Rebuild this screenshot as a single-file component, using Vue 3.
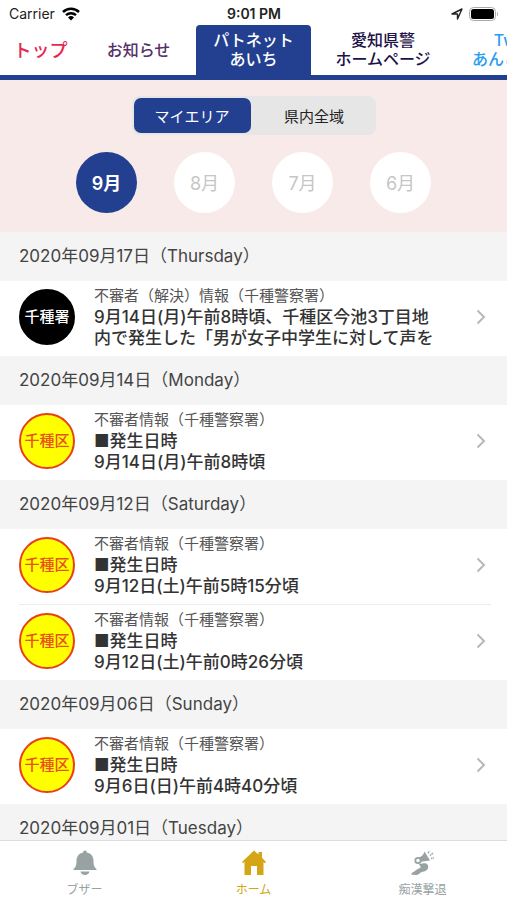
<script setup>
import { ref } from "vue";

const tabs = [
  { name: "top", lines: ["トップ"] },
  { name: "news", lines: ["お知らせ"] },
  { name: "patnet", lines: ["パトネット", "あいち"] },
  { name: "police", lines: ["愛知県警", "ホームページ"] },
  { name: "twitter", lines: ["Twitter", "あんころりん"] },
];
const activeTab = ref("patnet");

const areas = ["マイエリア", "県内全域"];
const area = ref(areas[0]);

const months = ["9月", "8月", "7月", "6月"];
const month = ref(months[0]);

const days = [
  {
    date: "2020年09月17日（Thursday）",
    items: [
      {
        id: 1,
        badge: "千種署",
        solved: true,
        title: "不審者（解決）情報（千種警察署）",
        body: ["9月14日(月)午前8時頃、千種区今池3丁目地", "内で発生した「男が女子中学生に対して声を"],
      },
    ],
  },
  {
    date: "2020年09月14日（Monday）",
    items: [
      { id: 2, badge: "千種区", title: "不審者情報（千種警察署）", body: ["■発生日時", "9月14日(月)午前8時頃"] },
    ],
  },
  {
    date: "2020年09月12日（Saturday）",
    items: [
      { id: 3, badge: "千種区", title: "不審者情報（千種警察署）", body: ["■発生日時", "9月12日(土)午前5時15分頃"] },
      { id: 4, badge: "千種区", title: "不審者情報（千種警察署）", body: ["■発生日時", "9月12日(土)午前0時26分頃"] },
    ],
  },
  {
    date: "2020年09月06日（Sunday）",
    items: [
      { id: 5, badge: "千種区", title: "不審者情報（千種警察署）", body: ["■発生日時", "9月6日(日)午前4時40分頃"] },
    ],
  },
  { date: "2020年09月01日（Tuesday）", items: [] },
];

const page = ref("home");
</script>

<template>
  <div class="app">
    <div class="status">
      <div class="status-left">
        <span>Carrier</span>
        <svg width="20" height="15" viewBox="0 0 20 15">
          <path d="M2 6a11.500 11.500 0 0 1 16 0M5 9.200a7.300 7.300 0 0 1 10 0" fill="none" stroke="#000" stroke-width="2.500" />
          <path d="M10 14.500l-3-3a4.300 4.300 0 0 1 6 0z" />
        </svg>
      </div>
      <strong class="clock">9:01 PM</strong>
      <div class="status-right">
        <svg width="12" height="12" viewBox="0 0 12 12">
          <path d="M1 6L11 1L6.500 11V6z" fill="none" stroke="#222" stroke-width="1.400" stroke-linejoin="round" />
        </svg>
        <svg width="30" height="14" viewBox="0 0 30 14">
          <rect x="0.500" y="0.500" width="26" height="13" rx="4" fill="#fff" stroke="#aaa" />
          <rect x="2" y="2" width="23" height="10" rx="2.500" />
          <path d="M28 4.500q2 2.500 0 5z" fill="#aaa" />
        </svg>
      </div>
    </div>

    <nav class="tabs">
      <button v-for="t in tabs" :key="t.name" class="tab" :class="[t.name, { active: activeTab === t.name }]"
        @click="activeTab = t.name">
        <span v-for="line in t.lines" :key="line">{{ line }}</span>
      </button>
    </nav>

    <section class="filter">
      <div class="segment">
        <button v-for="a in areas" :key="a" :class="{ on: area === a }" @click="area = a">{{ a }}</button>
      </div>
      <div class="months">
        <button v-for="m in months" :key="m" :class="{ on: month === m }" @click="month = m">{{ m }}</button>
      </div>
    </section>

    <main class="list">
      <section v-for="day in days" :key="day.date">
        <h2 class="date">{{ day.date }}</h2>
        <ul class="items">
          <li v-for="item in day.items" :key="item.id">
            <a href="#" class="row" @click.prevent>
              <span class="badge" :class="{ solved: item.solved }">{{ item.badge }}</span>
              <span class="text">
                <span class="title">{{ item.title }}</span>
                <span v-for="line in item.body" :key="line" class="line">{{ line }}</span>
              </span>
              <svg class="arrow" width="10" height="16" viewBox="0 0 10 16">
                <path d="M1.500 1.500L8 8L1.500 14.500" fill="none" stroke="#b8b8b8" stroke-width="2" />
              </svg>
            </a>
          </li>
        </ul>
      </section>
    </main>

    <nav class="bottom">
      <button :class="{ current: page === 'buzzer' }" @click="page = 'buzzer'">
        <svg width="26" height="26" viewBox="0 0 26 26" fill="currentColor">
          <path d="M13 0.500c1.200 0 1.800.9 1.800 1.900C19 3.300 21.500 6.300 21.500 10.500c0 4.500.5 6.500 3 8.500v1h-23v-1c2.500-2 3-4 3-8.500 0-4.200 2.500-7.200 6.700-8.100 0-1 .6-1.900 1.800-1.900z" />
          <path d="M8.500 21.500h9c-.5 2.200-2.200 3.500-4.500 3.500s-4-1.300-4.500-3.500z" />
        </svg>
        <span>ブザー</span>
      </button>
      <button :class="{ current: page === 'home' }" @click="page = 'home'">
        <svg width="26" height="26" viewBox="0 0 26 26" fill="currentColor">
          <path d="M13 0.500l4.500 4V2H21v5.800L25 12l-1.200 1.200L22.500 12V25H16v-9h-6v9H3.500V12l-1.300 1.200L1 12z" />
        </svg>
        <span>ホーム</span>
      </button>
      <button :class="{ current: page === 'repel' }" @click="page = 'repel'">
        <svg width="26" height="26" viewBox="0 0 26 26" fill="currentColor">
          <path d="M14.500 1.500l5.500 9-9 1.200-2.500-4.200c3-.8 5-2.800 6-6z" />
          <circle cx="8" cy="10.500" r="2.700" fill="none" stroke="currentColor" stroke-width="1.800" />
          <path d="M8.500 13.500c2.500 1 4-.5 6.500-.3 2.500.3 3.800 2.500 3 5-.7 2.200-3.300 3.300-5.500 3.600-2.500.4-3.500 3-6 3.200l-5-.2c-.5-1 .2-2 1.500-2.600 2.500-1 3-2.700 7-4.200 1.500-.5 0-2.500-1.500-4.500z" />
          <path d="M18 3l1.500-2M20 5.500l3-2.500M21 8.500l3-.5" fill="none" stroke="currentColor" stroke-width="1.500" stroke-dasharray="1.500 0.700" />
        </svg>
        <span>痴漢撃退</span>
      </button>
    </nav>
  </div>
</template>

<style>
body {
  margin: 0;
}
</style>

<style scoped>
* {
  box-sizing: border-box;
}

.app {
  height: 100vh;
  display: flex;
  flex-direction: column;
  overflow: hidden;
  background: #fff;
  color: #333;
  font-family: Inter, "Noto Sans CJK JP", sans-serif;
}

button {
  margin: 0;
  padding: 0;
  border: none;
  background: none;
  font-family: inherit;
  cursor: pointer;
}

.status {
  flex: none;
  height: 25px;
  padding: 2px 8px 0 9px;
  display: grid;
  grid-template-columns: 1fr auto 1fr;
  align-items: center;
  font-size: 14px;
  color: #222;
}

.status-left,
.status-right {
  display: flex;
  align-items: center;
  gap: 6px;
}

.status-right {
  justify-content: flex-end;
}

.clock {
  font-weight: 600;
}

.tabs {
  flex: none;
  height: 55px;
  display: flex;
  overflow: hidden;
  border-bottom: 5px solid #233f90;
}

.tab {
  flex: none;
  display: flex;
  flex-direction: column;
  align-items: center;
  justify-content: center;
  width: 115px;
  font-size: 16px;
  line-height: 19px;
  font-weight: 500;
  white-space: nowrap;
  border-radius: 4px 4px 0 0;
}

.tab.top {
  width: 81px;
  font-size: 18px;
  color: #e6294f;
}

.tab.news {
  color: #56316b;
}

.tab.police {
  width: 144px;
  color: #1d1147;
}

.tab.twitter {
  width: 130px;
  color: #2b9cf0;
}

.tab.active {
  background: #233f90;
  color: #fff;
}

.filter {
  flex: none;
  padding: 16px 0 19px;
  background: #f8eae9;
  display: flex;
  flex-direction: column;
  align-items: center;
  gap: 17px;
}

.segment {
  display: flex;
  padding: 2px;
  border-radius: 8px;
  background: #e6e6e6;
}

.segment button {
  width: 117px;
  height: 35px;
  border-radius: 7px;
  font-size: 15px;
  color: #222;
}

.segment button:last-child {
  width: 123px;
  padding-left: 4px;
}

.segment button.on {
  background: #233f90;
  color: #fff;
}

.months {
  display: flex;
  gap: 37px;
}

.months button {
  width: 61px;
  height: 61px;
  padding-bottom: 2px;
  border-radius: 50%;
  background: #fff;
  color: #c6c6c6;
  font-size: 18px;
}

.months button.on {
  background: #233f90;
  color: #fff;
  font-weight: 600;
}

.list {
  flex: 1;
  min-height: 0;
  overflow: hidden;
}

.date {
  margin: 0;
  height: 49px;
  padding-left: 19px;
  background: #f4f4f4;
  font-size: 17px;
  line-height: 49px;
  font-weight: 400;
  color: #444;
}

.items {
  margin: 0;
  padding: 0;
  list-style: none;
}

.items li + li {
  margin: 0 16px 0 19px;
  border-top: 1px solid #ececec;
}

.items li + li .row {
  padding: 0 5px 3px 0;
}

.row {
  display: flex;
  align-items: center;
  height: 75px;
  padding: 0 21px 3px 19px;
  color: inherit;
  text-decoration: none;
}

.badge {
  flex: none;
  width: 56px;
  height: 56px;
  border: 2px solid #e8401c;
  border-radius: 50%;
  background: #ff0;
  color: #e8501c;
  font-size: 15px;
  line-height: 52px;
  font-weight: 500;
  text-align: center;
  white-space: nowrap;
}

.badge.solved {
  border-color: #000;
  background: #000;
  color: #fff;
}

.text {
  flex: 1;
  min-width: 0;
  margin-left: 19px;
  display: flex;
  flex-direction: column;
  white-space: nowrap;
}

.title {
  font-size: 15px;
  line-height: 22px;
  color: #555;
}

.line {
  font-size: 17px;
  line-height: 21px;
  font-weight: 500;
}

.arrow {
  flex: none;
}

.bottom {
  flex: none;
  height: 60px;
  padding-top: 9px;
  display: flex;
  border-top: 1px solid #ddd;
  background: #fff;
}

.bottom button {
  flex: 1;
  display: flex;
  flex-direction: column;
  align-items: center;
  justify-content: flex-start;
  gap: 7px;
  font-size: 12px;
  line-height: 14px;
  color: #98a2a3;
}

.bottom button.current {
  color: #d4a514;
}
</style>
